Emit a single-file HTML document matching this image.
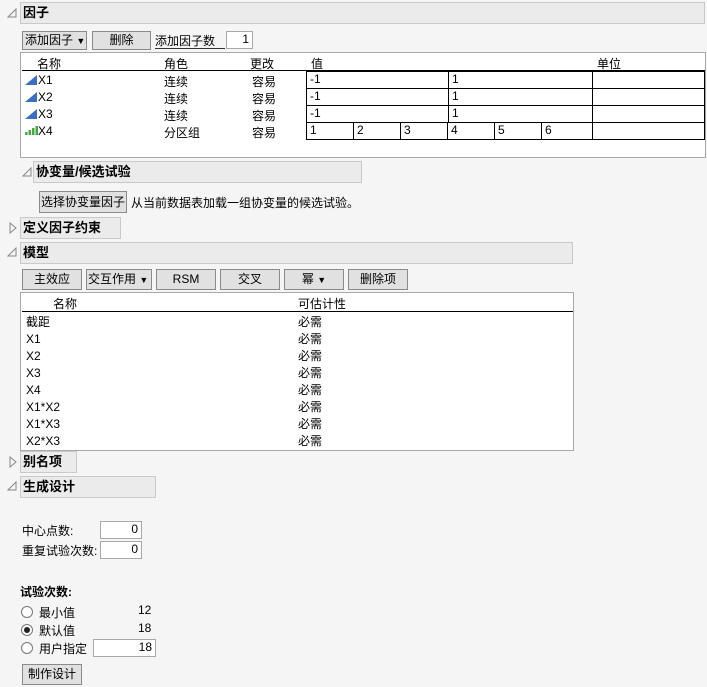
<!DOCTYPE html>
<html><head><meta charset="utf-8"><style>
body{margin:0;width:707px;height:687px;background:#f5f5f5;font-family:"Liberation Sans","Noto Sans CJK SC",sans-serif;font-size:12px;color:#000;position:relative;overflow:hidden}
.a{position:absolute;white-space:nowrap}
.bar{position:absolute;background:#ebebeb;border:1px solid #c9c9c9;box-sizing:border-box;font-weight:bold;font-size:13px;padding-left:2px;line-height:19px}
.btn{position:absolute;background:#e1e1e1;border:1px solid #8a8a8a;box-sizing:border-box;text-align:center;line-height:17px}
.box{position:absolute;background:#fff;border:1px solid #a8a8a8;box-sizing:border-box}
.cell{position:absolute;border:1px solid #000;box-sizing:border-box;background:#fff;padding-left:3px;line-height:15px}
.inp{position:absolute;background:#fff;border:1px solid #a8a8a8;box-sizing:border-box;text-align:right;padding-right:3px;line-height:15px}
.radio{position:absolute;width:12px;height:12px;border:1px solid #777;border-radius:50%;background:#fff;box-sizing:border-box}
</style></head><body>
<svg class="a" style="left:7px;top:8px" width="10" height="10"><path d="M9 1 L9 9 L1 9 Z" fill="none" stroke="#888"/></svg>
<div class="bar" style="left:20px;top:2px;width:685px;height:22px">因子</div>
<div class="btn" style="left:22px;top:31px;width:65px;height:19px;text-align:left;padding-left:2px">添加因子 <span style="font-size:9px">▼</span></div>
<div class="btn" style="left:92px;top:31px;width:59px;height:19px">删除</div>
<div class="a" style="left:155px;top:32px;border-bottom:1px solid #333;width:70px;height:16px">添加因子数</div>
<div class="inp" style="left:226px;top:31px;width:27px;height:18px">1</div>
<div class="box" style="left:20px;top:52px;width:686px;height:106px"></div>
<div class="a" style="left:37px;top:55px">名称</div>
<div class="a" style="left:164px;top:55px">角色</div>
<div class="a" style="left:250px;top:55px">更改</div>
<div class="a" style="left:311px;top:55px">值</div>
<div class="a" style="left:597px;top:55px">单位</div>
<div class="a" style="left:22px;top:70px;width:683px;border-top:1px solid #000"></div>
<svg class="a" style="left:25px;top:74px" width="13" height="62">
<path d="M0 11 L12 1 L12 11Z" fill="#3a6fc4"/><path d="M0 28 L12 18 L12 28Z" fill="#3a6fc4"/><path d="M0 45 L12 35 L12 45Z" fill="#3a6fc4"/>
<rect x="0" y="58" width="2.5" height="3" fill="#4a4"/><rect x="3.5" y="56" width="2.5" height="5" fill="#4a4"/><rect x="7" y="54" width="2.5" height="7" fill="#4a4"/><rect x="10.5" y="52" width="2.5" height="9" fill="#4a4"/></svg>
<div class="a" style="left:38px;top:73px">X1</div><div class="a" style="left:164px;top:73px">连续</div><div class="a" style="left:252px;top:73px">容易</div>
<div class="a" style="left:38px;top:90px">X2</div><div class="a" style="left:164px;top:90px">连续</div><div class="a" style="left:252px;top:90px">容易</div>
<div class="a" style="left:38px;top:107px">X3</div><div class="a" style="left:164px;top:107px">连续</div><div class="a" style="left:252px;top:107px">容易</div>
<div class="a" style="left:38px;top:124px">X4</div><div class="a" style="left:164px;top:124px">分区组</div><div class="a" style="left:252px;top:124px">容易</div>
<div class="cell" style="left:306px;top:71px;width:143px;height:18px">-1</div><div class="cell" style="left:448px;top:71px;width:145px;height:18px">1</div><div class="cell" style="left:592px;top:71px;width:113px;height:18px"></div>
<div class="cell" style="left:306px;top:88px;width:143px;height:18px">-1</div><div class="cell" style="left:448px;top:88px;width:145px;height:18px">1</div><div class="cell" style="left:592px;top:88px;width:113px;height:18px"></div>
<div class="cell" style="left:306px;top:105px;width:143px;height:18px">-1</div><div class="cell" style="left:448px;top:105px;width:145px;height:18px">1</div><div class="cell" style="left:592px;top:105px;width:113px;height:18px"></div>
<div class="cell" style="left:306px;top:122px;width:48px;height:18px">1</div><div class="cell" style="left:353px;top:122px;width:48px;height:18px">2</div><div class="cell" style="left:400px;top:122px;width:48px;height:18px">3</div><div class="cell" style="left:447px;top:122px;width:48px;height:18px">4</div><div class="cell" style="left:494px;top:122px;width:48px;height:18px">5</div><div class="cell" style="left:541px;top:122px;width:52px;height:18px">6</div><div class="cell" style="left:592px;top:122px;width:113px;height:18px"></div>
<svg class="a" style="left:22px;top:167px" width="10" height="10"><path d="M9 1 L9 9 L1 9 Z" fill="none" stroke="#888"/></svg>
<div class="bar" style="left:33px;top:161px;width:329px;height:22px">协变量/候选试验</div>
<div class="btn" style="left:39px;top:191px;width:88px;height:22px;line-height:20px">选择协变量因子</div>
<div class="a" style="left:131px;top:194px">从当前数据表加载一组协变量的候选试验。</div>
<svg class="a" style="left:9px;top:222px" width="8" height="12"><path d="M1 1 L7 6 L1 11 Z" fill="none" stroke="#888"/></svg>
<div class="bar" style="left:20px;top:217px;width:101px;height:22px">定义因子约束</div>
<svg class="a" style="left:7px;top:247px" width="10" height="10"><path d="M9 1 L9 9 L1 9 Z" fill="none" stroke="#888"/></svg>
<div class="bar" style="left:20px;top:242px;width:553px;height:22px">模型</div>
<div class="btn" style="left:22px;top:269px;width:60px;height:21px;line-height:19px">主效应</div>
<div class="btn" style="left:86px;top:269px;width:66px;height:21px;line-height:19px;text-align:left;padding-left:1px">交互作用 <span style="font-size:9px">▼</span></div>
<div class="btn" style="left:156px;top:269px;width:60px;height:21px;line-height:19px">RSM</div>
<div class="btn" style="left:220px;top:269px;width:60px;height:21px;line-height:19px">交叉</div>
<div class="btn" style="left:284px;top:269px;width:60px;height:21px;line-height:19px">幂 <span style="font-size:9px">▼</span></div>
<div class="btn" style="left:348px;top:269px;width:60px;height:21px;line-height:19px">删除项</div>
<div class="box" style="left:20px;top:292px;width:554px;height:159px"></div>
<div class="a" style="left:53px;top:295px">名称</div><div class="a" style="left:298px;top:295px">可估计性</div>
<div class="a" style="left:22px;top:311px;width:551px;border-top:1px solid #000"></div>
<div class="a" style="left:26px;top:314px;line-height:17px">截距<br>X1<br>X2<br>X3<br>X4<br>X1*X2<br>X1*X3<br>X2*X3</div>
<div class="a" style="left:298px;top:314px;line-height:17px">必需<br>必需<br>必需<br>必需<br>必需<br>必需<br>必需<br>必需</div>
<svg class="a" style="left:9px;top:456px" width="8" height="12"><path d="M1 1 L7 6 L1 11 Z" fill="none" stroke="#888"/></svg>
<div class="bar" style="left:20px;top:451px;width:57px;height:22px">别名项</div>
<svg class="a" style="left:7px;top:481px" width="10" height="10"><path d="M9 1 L9 9 L1 9 Z" fill="none" stroke="#888"/></svg>
<div class="bar" style="left:20px;top:476px;width:136px;height:22px">生成设计</div>
<div class="a" style="left:22px;top:522px">中心点数:</div>
<div class="inp" style="left:100px;top:521px;width:42px;height:18px">0</div>
<div class="a" style="left:22px;top:542px">重复试验次数:</div>
<div class="inp" style="left:100px;top:541px;width:42px;height:18px">0</div>
<div class="a" style="left:20px;top:583px;font-weight:bold">试验次数:</div>
<div class="radio" style="left:21px;top:606px"></div>
<div class="radio" style="left:21px;top:624px"><div style="width:6px;height:6px;border-radius:50%;background:#222;margin:2px"></div></div>
<div class="radio" style="left:21px;top:642px"></div>
<div class="a" style="left:39px;top:604px">最小值</div><div class="a" style="left:138px;top:603px">12</div>
<div class="a" style="left:39px;top:622px">默认值</div><div class="a" style="left:138px;top:621px">18</div>
<div class="a" style="left:39px;top:640px">用户指定</div>
<div class="inp" style="left:93px;top:639px;width:63px;height:18px">18</div>
<div class="btn" style="left:22px;top:664px;width:60px;height:21px;line-height:19px">制作设计</div>
</body></html>
